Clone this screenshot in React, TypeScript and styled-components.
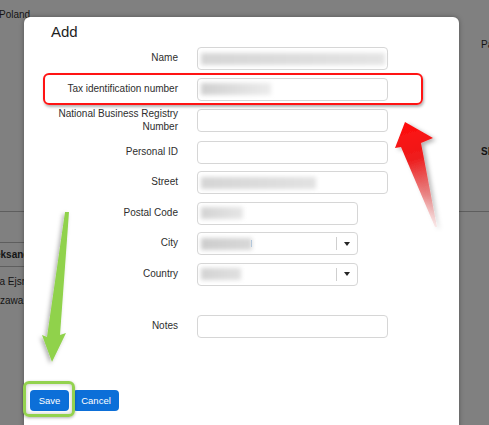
import React from "react";
import styled, { createGlobalStyle } from "styled-components";

const Global = createGlobalStyle`
  html, body { margin: 0; padding: 0; }
  body {
    width: 489px;
    height: 425px;
    overflow: hidden;
    background: #808080;
    font-family: "Liberation Sans", Arial, sans-serif;
  }
`;

const Screen = styled.div`
  position: relative;
  width: 489px;
  height: 425px;
  overflow: hidden;
  background: #808080;
`;

/* ---------- background page (dimmed) ---------- */
const BackPage = styled.div`
  display: flex;
  flex-direction: column;
  width: 489px;
  height: 425px;
  color: #141414;
  font-size: 10px;
  line-height: 12px;
  overflow: hidden;
`;

const BackTop = styled.div`
  display: flex;
  justify-content: space-between;
  height: 211px;
  border-bottom: 1px solid #5e5e5e;
`;

const BackLeft = styled.div`
  padding-top: 9px;
  margin-left: -1px;
`;

const BackRight = styled.div`
  display: flex;
  flex-direction: column;
  width: 8px;
  padding-top: 39px;
  gap: 95px;
  white-space: nowrap;
  overflow: hidden;
`;

const BackRow = styled.div<{ $h: number; $line?: boolean; $bold?: boolean; $shift?: number }>`
  height: ${(p) => p.$h}px;
  width: 160px;
  display: flex;
  align-items: center;
  white-space: nowrap;
  margin-left: ${(p) => -(p.$shift ?? 0)}px;
  font-weight: ${(p) => (p.$bold ? 700 : 400)};
  border-bottom: ${(p) => (p.$line ? "1px solid #5e5e5e" : "none")};
`;

/* ---------- modal ---------- */
const Modal = styled.div`
  position: absolute;
  left: 24px;
  top: 17px;
  width: 435px;
  height: 430px;
  background: #ffffff;
  border-radius: 6px;
  box-shadow: 0 0 5px rgba(0, 0, 0, 0.35);
  padding-top: 6px;
  box-sizing: border-box;
  display: flex;
  flex-direction: column;
`;

const Title = styled.h2`
  margin: 0 0 6px 0;
  padding-left: 27px;
  font-size: 15px;
  line-height: 18px;
  font-weight: 400;
  color: #1e1e1e;
`;

const Form = styled.div`
  display: grid;
  grid-template-columns: 154px auto;
  column-gap: 19px;
  row-gap: 7.5px;
  align-items: center;
  justify-items: start;
`;

const Label = styled.div`
  justify-self: end;
  text-align: right;
  font-size: 10px;
  line-height: 12.5px;
  color: #2e2e2e;
`;

const Field = styled.div<{ $w: number }>`
  width: ${(p) => p.$w}px;
  height: 23px;
  box-sizing: border-box;
  border: 1px solid #d6d6d6;
  border-radius: 4px;
  background: #fff;
  display: flex;
  align-items: center;
  padding-left: 3px;
`;

const Redacted = styled.div<{ $w: number; $from: string; $to: string }>`
  width: ${(p) => p.$w}px;
  height: 12px;
  background: linear-gradient(90deg, ${(p) => p.$from}, ${(p) => p.$to});
  filter: blur(2px);
`;

const Caret = styled.div`
  width: 1px;
  height: 7px;
  background: #7fb0e0;
  margin-left: -1px;
`;

const SelectBox = styled(Field)`
  padding-left: 3px;
`;

const SelectValue = styled.div`
  flex: 1;
  display: flex;
  align-items: center;
`;

const SelectArrow = styled.div`
  width: 20px;
  height: 13px;
  border-left: 1px solid #cfcfcf;
  display: flex;
  align-items: center;
  justify-content: center;
  &::after {
    content: "";
    border-left: 3px solid transparent;
    border-right: 3px solid transparent;
    border-top: 4px solid #262626;
  }
`;

const Spacer = styled.div`
  grid-column: 1 / -1;
  height: 14px;
`;

const Buttons = styled.div`
  display: flex;
  gap: 4px;
  padding-left: 6px;
  margin-top: 52.5px;
`;

const Button = styled.button<{ $w: number }>`
  width: ${(p) => p.$w}px;
  height: 21px;
  padding: 0;
  border: none;
  border-radius: 4px;
  background: #0c6fd8;
  color: #fff;
  font-family: "Liberation Sans", Arial, sans-serif;
  font-size: 9.5px;
  line-height: 21px;
`;

/* ---------- annotations ---------- */
const RedFrame = styled.div`
  position: absolute;
  left: 43px;
  top: 73px;
  width: 380px;
  height: 32px;
  box-sizing: border-box;
  border: 2px solid #ff1414;
  border-radius: 6px;
  box-shadow: 1px 2px 3px rgba(0, 0, 0, 0.3);
  pointer-events: none;
`;

const GreenFrame = styled.div`
  position: absolute;
  left: 23px;
  top: 381px;
  width: 52px;
  height: 36px;
  box-sizing: border-box;
  border: 3px solid #93d24f;
  border-radius: 6px;
  box-shadow: inset 0 0 4px rgba(0, 0, 0, 0.25), 0 1px 3px rgba(0, 0, 0, 0.3);
  pointer-events: none;
`;

const Arrows = styled.svg`
  position: absolute;
  left: 0;
  top: 0;
  width: 489px;
  height: 425px;
  pointer-events: none;
`;

const Select = ({ w, from, to, caret }: { w: number; from: string; to: string; caret?: boolean }) => (
  <SelectBox $w={161}>
    <SelectValue>
      <Redacted $w={w} $from={from} $to={to} />
      {caret && <Caret />}
    </SelectValue>
    <SelectArrow />
  </SelectBox>
);

export default function App() {
  return (
    <Screen>
      <Global />
      <BackPage>
        <BackTop>
          <BackLeft>Poland</BackLeft>
          <BackRight>
            <span>Pa</span>
            <span style={{ fontWeight: 700 }}>Sl</span>
          </BackRight>
        </BackTop>
        <BackRow $h={30} $line />
        <BackRow $h={23} $line $bold $shift={15}>Aleksandra</BackRow>
        <BackRow $h={29} $shift={20}>Kasia Ejsmont</BackRow>
        <BackRow $h={10} $shift={23}>Warszawa,</BackRow>
      </BackPage>

      <Modal>
        <Title>Add</Title>
        <Form>
          <Label>Name</Label>
          <Field $w={191}>
            <Redacted $w={184} $from="#d6d6d6" $to="#e4e4e4" />
          </Field>

          <Label>Tax identification number</Label>
          <Field $w={191}>
            <Redacted $w={70} $from="#d0d0d0" $to="#ececec" />
          </Field>

          <Label>
            National Business Registry
            <br />
            Number
          </Label>
          <Field $w={191} />

          <Label>Personal ID</Label>
          <Field $w={191} />

          <Label>Street</Label>
          <Field $w={191}>
            <Redacted $w={115} $from="#d5d5d5" $to="#e2e2e2" />
          </Field>

          <Label>Postal Code</Label>
          <Field $w={161}>
            <Redacted $w={42} $from="#d3d3d3" $to="#e6e6e6" />
          </Field>

          <Label>City</Label>
          <Select w={51} from="#cdcdcd" to="#d8d8d8" caret />

          <Label>Country</Label>
          <Select w={40} from="#d3d3d3" to="#e0e0e0" />

          <Spacer />

          <Label>Notes</Label>
          <Field $w={191} />
        </Form>
        <Buttons>
          <Button $w={39}>Save</Button>
          <Button $w={46}>Cancel</Button>
        </Buttons>
      </Modal>

      <RedFrame />
      <GreenFrame />

      <Arrows viewBox="0 0 489 425">
        <defs>
          <linearGradient id="redFade" x1="405" y1="122" x2="437" y2="226" gradientUnits="userSpaceOnUse">
            <stop offset="0" stopColor="#ff0d0d" />
            <stop offset="0.35" stopColor="#ee1c1c" />
            <stop offset="0.7" stopColor="#e96a6a" stopOpacity="0.75" />
            <stop offset="1" stopColor="#f2b8b8" stopOpacity="0.3" />
          </linearGradient>
          <filter id="redShadow" x="-30%" y="-30%" width="160%" height="160%">
            <feDropShadow dx="3" dy="2" stdDeviation="2" floodColor="#000" floodOpacity="0.3" />
          </filter>
          <filter id="greenShadow" x="-40%" y="-10%" width="180%" height="130%">
            <feDropShadow dx="-2" dy="2" stdDeviation="2" floodColor="#000" floodOpacity="0.3" />
          </filter>
        </defs>
        <polygon
          points="405,122 433,138 421,143 437,227 435,227 401,147 395,148"
          fill="url(#redFade)"
          filter="url(#redShadow)"
        />
        <polygon
          points="65,212 69,212 60,335 66,333 52,362 42,335 47,337"
          fill="#90d24c"
          filter="url(#greenShadow)"
        />
      </Arrows>
    </Screen>
  );
}
